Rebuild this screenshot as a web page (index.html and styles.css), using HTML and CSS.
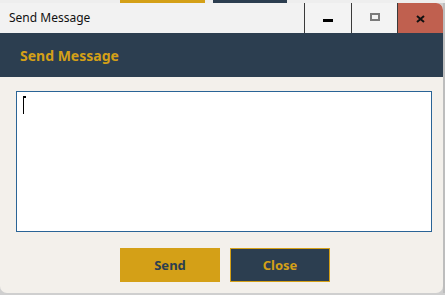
FILE: index.html
```html
<!DOCTYPE html>
<html>
<head>
<meta charset="utf-8">
<link rel="stylesheet" href="styles.css">
</head>
<body>
<div class="backdrop">
  <span class="bd-a"></span><span class="bd-gold"></span><span class="bd-gap"></span><span class="bd-dark"></span><span class="bd-b"></span>
</div>
<div class="row">
<div class="window">
  <div class="titlebar">
    <span class="title">Send Message</span>
    <div class="controls">
      <div class="ctl ctl-min"><span class="min-glyph"></span></div>
      <div class="ctl ctl-max"><span class="max-glyph"></span></div>
      <div class="ctl ctl-close"><svg width="9" height="8" viewBox="0 0 9 8"><path d="M1 1L8 7M8 1L1 7" stroke="#111" stroke-width="2" fill="none"/></svg></div>
    </div>
  </div>
  <div class="header">Send Message</div>
  <div class="content">
    <div class="msgbox"><span class="caret"></span></div>
    <div class="actions">
      <button class="btn btn-send">Send</button>
      <button class="btn btn-close">Close</button>
    </div>
  </div>
</div>
<div class="edge"></div>
</div>
</body>
</html>
```
FILE: styles.css
```css
html, body {
  margin: 0;
  padding: 0;
}
body {
  width: 445px;
  height: 295px;
  overflow: hidden;
  background: #cfcfcf;
  font-family: "Noto Sans", "Open Sans", sans-serif;
}
.backdrop {
  display: flex;
  height: 3px;
  background: #eeeeee;
}
.bd-a { width: 120px; }
.bd-gold { width: 85px; background: #d4a017; }
.bd-gap { width: 8px; }
.bd-dark { width: 74px; background: #2c3e50; }
.bd-b { flex: 1; }
.row {
  display: flex;
}
.window {
  width: 443px;
  height: 290px;
  display: flex;
  flex-direction: column;
  background: #f3f0eb;
  border-radius: 0 7px 7px 7px;
  overflow: hidden;
}
.edge {
  width: 2px;
  background: #bdbdbd;
}
.titlebar {
  height: 30px;
  display: flex;
  align-items: stretch;
  background: #f2f2f2;
}
.title {
  flex: 1;
  padding-left: 9px;
  font-size: 12px;
  line-height: 30px;
  color: #111;
}
.controls {
  display: flex;
}
.ctl {
  display: flex;
  align-items: center;
  justify-content: center;
  border-left: 1px solid #3a3a3a;
}
.ctl-min { width: 46px; background: #f3f3f3; }
.ctl-max { width: 45px; background: #f3f3f3; }
.ctl-close { width: 45px; background: #c0604f; border-left: 1px solid #3a3a3a; }
.min-glyph {
  width: 10px;
  height: 3px;
  background: #000;
  margin-top: 4px;
}
.max-glyph {
  width: 6px;
  height: 4px;
  border: 2px solid #7a7a7a;
  margin-top: -3px;
}
.ctl-close svg { margin-top: 1px; }
.header {
  height: 44px;
  background: #2c3e50;
  color: #d4a017;
  font-weight: 700;
  font-size: 14px;
  line-height: 46px;
  padding-left: 20px;
}
.content {
  padding: 14px 11px 0 16px;
  display: flex;
  flex-direction: column;
}
.msgbox {
  box-sizing: border-box;
  height: 141px;
  background: #fff;
  border: 1px solid #2a6496;
  padding: 3px 6px;
}
.caret {
  display: block;
  width: 1px;
  height: 18px;
  background: #000;
  margin-top: 1px;
  position: relative;
}
.caret::after {
  content: "";
  position: absolute;
  left: 1px;
  top: 0;
  width: 2px;
  height: 2px;
  background: #000;
}
.actions {
  display: flex;
  justify-content: center;
  gap: 10px;
  margin-top: 16px;
  padding-left: 2px;
}
.btn {
  width: 100px;
  height: 34px;
  font-family: "Noto Sans", "Open Sans", sans-serif;
  font-weight: 700;
  font-size: 13px;
  padding: 0;
  margin: 0;
  cursor: pointer;
}
.btn-send {
  background: #d4a017;
  color: #2c3e50;
  border: none;
}
.btn-close {
  background: #2c3e50;
  color: #d4a017;
  border: 1px solid #d4a017;
}
```
